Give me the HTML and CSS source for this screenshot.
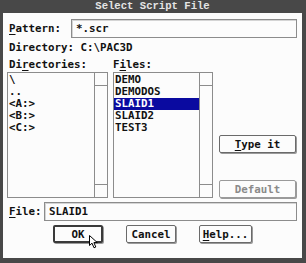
FILE: index.html
```html
<!DOCTYPE html>
<html lang="en">
<head>
    <meta charset="UTF-8">
    <title>Select Script File</title>
    <link rel="stylesheet" href="styles.css">
</head>
<body>
    <div class="dialog">
        <div class="titlebar">Select Script File</div>
        <div class="body">
            <div class="row pattern-row">
                <span class="label"><u>P</u>attern:</span>
                <div class="field">*.scr</div>
            </div>
            <div class="dir">Directory: C:\PAC3D</div>
            <div class="lists">
                <div class="col dirs">
                    <div class="cap">Di<u>r</u>ectories:</div>
                    <div class="listbox">
                        <div class="items">
                            <div class="item">\</div>
                            <div class="item">..</div>
                            <div class="item">&lt;A:&gt;</div>
                            <div class="item">&lt;B:&gt;</div>
                            <div class="item">&lt;C:&gt;</div>
                        </div>
                        <div class="scroll"><div class="arrow"></div><div class="track"></div><div class="arrow"></div></div>
                    </div>
                </div>
                <div class="col files">
                    <div class="cap">F<u>i</u>les:</div>
                    <div class="listbox">
                        <div class="items">
                            <div class="item">DEMO</div>
                            <div class="item">DEMODOS</div>
                            <div class="item selected">SLAID1</div>
                            <div class="item">SLAID2</div>
                            <div class="item">TEST3</div>
                        </div>
                        <div class="scroll"><div class="arrow"></div><div class="track"></div><div class="arrow"></div></div>
                    </div>
                </div>
                <div class="side">
                    <button class="btn"><u>T</u>ype it</button>
                    <button class="btn disabled">Default</button>
                </div>
            </div>
            <div class="row file-row">
                <span class="label"><u>F</u>ile:</span>
                <div class="field">SLAID1</div>
            </div>
            <div class="actions">
                <button class="btn default">OK</button>
                <button class="btn">Cancel</button>
                <button class="btn help"><u>H</u>elp...</button>
            </div>
        </div>
        <svg class="cursor" width="10" height="14" viewBox="0 0 10 14">
            <path d="M0.5 0.5 L0.5 10.5 L3 8.2 L5 12.8 L6.8 12 L4.9 7.6 L8.3 7.6 Z" fill="#fff" stroke="#000" stroke-width="1"/>
        </svg>
    </div>
</body>
</html>
```

FILE: styles.css
```css
body {
    margin: 0;
    background: #fff;
}
.dialog {
    position: relative;
    width: 306px;
    height: 263px;
    box-sizing: border-box;
    background: #484848;
    padding: 0 4px 5px 3px;
    display: flex;
    flex-direction: column;
    font-family: "DejaVu Sans Mono", monospace;
    font-weight: bold;
    font-size: 10.8px;
    color: #111;
}
.titlebar {
    height: 13px;
    line-height: 13px;
    text-align: center;
    color: #e4e4e4;
    font-family: "Liberation Mono", monospace;
    font-size: 10.6px;
}
.body {
    flex: 1;
    background: #fcfcfc;
    padding: 6px 5px 0 4px;
    display: flex;
    flex-direction: column;
}
u {
    text-decoration-thickness: 1px;
    text-underline-offset: 2px;
}
.row {
    display: flex;
    align-items: center;
}
.label {
    flex-shrink: 0;
    box-sizing: border-box;
    padding-left: 2px;
}
.field {
    flex: 1;
    height: 19px;
    box-sizing: border-box;
    border: 1px solid #8c8c8c;
    box-shadow: inset 1px 1px 0 #d4d4d4;
    padding: 0 4px;
    line-height: 17px;
}
.pattern-row .label {
    width: 64px;
}
.dir {
    margin-top: 3px;
    height: 14px;
    line-height: 14px;
    padding-left: 2px;
}
.lists {
    margin-top: 3px;
    display: flex;
    gap: 5px;
}
.col {
    display: flex;
    flex-direction: column;
}
.dirs {
    width: 101px;
}
.files {
    width: 100px;
}
.cap {
    height: 14px;
    line-height: 13px;
}
.dirs .cap {
    padding-left: 2px;
}
.listbox {
    height: 126px;
    box-sizing: border-box;
    border: 1px solid #8c8c8c;
    display: flex;
}
.items {
    flex: 1;
    padding-top: 1px;
}
.item {
    height: 12px;
    line-height: 12px;
    padding-left: 1px;
}
.selected {
    background: #0a0aa0;
    color: #fff;
}
.scroll {
    width: 12px;
    border-left: 1px solid #8c8c8c;
    display: flex;
    flex-direction: column;
}
.arrow {
    height: 12px;
}
.scroll .arrow:first-child {
    border-bottom: 1px solid #8c8c8c;
}
.scroll .arrow:last-child {
    border-top: 1px solid #8c8c8c;
}
.track {
    flex: 1;
}
.side {
    width: 77px;
    margin-left: 1px;
    display: flex;
    flex-direction: column;
    justify-content: flex-end;
    gap: 27px;
}
.btn {
    height: 18px;
    box-sizing: border-box;
    padding: 0;
    font: inherit;
    color: #111;
    background: #fcfcfc;
    border: 1px solid #6a6a6a;
    border-radius: 2px;
    box-shadow: 1px 1px 0 #9a9a9a;
    line-height: 15px;
}
.disabled {
    color: #8a8a8a;
    border-color: #9a9a9a;
}
.file-row {
    margin-top: 4px;
}
.file-row .label {
    width: 37px;
}
.actions {
    margin-top: 4px;
    display: flex;
    gap: 23px;
    padding-left: 46px;
}
.actions .btn {
    width: 50px;
}
.actions .help {
    width: 53px;
}
.default {
    border: 2px solid #3a3a3a;
}
.cursor {
    position: absolute;
    left: 89px;
    top: 235px;
}
```
